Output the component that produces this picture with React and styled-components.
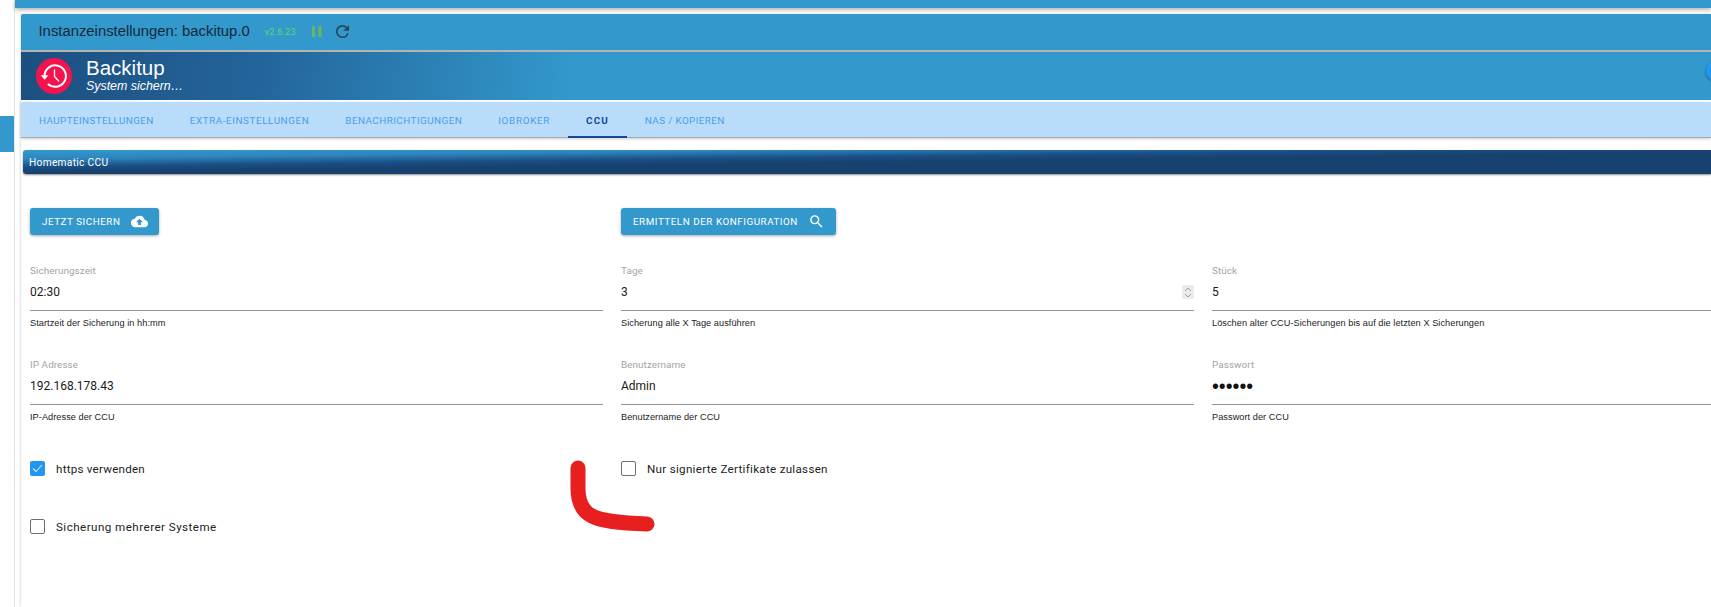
import React from 'react';
import styled, { createGlobalStyle } from 'styled-components';

const Global = createGlobalStyle`
  html, body { margin: 0; padding: 0; background: #fff; overflow: hidden; }
  body { font-family: "Liberation Sans", Arial, sans-serif; }
  * { box-sizing: border-box; }
`;
const Page = styled.div`
  position: relative; width: 1711px; height: 607px; overflow: hidden; display: flex; background: #fff;
`;
const Rail = styled.aside`
  width: 15px; flex: none; padding-top: 116px; border-right: 1px solid #e3e3e3;
`;
const RailMark = styled.div`
  width: 14px; height: 36px; background: #3399cc;
`;
const Main = styled.main`
  flex: 1; min-width: 0; display: flex; flex-direction: column;
`;
const TopBar = styled.div`
  height: 8px; flex: none; background: #3399cc; box-shadow: 0 2px 4px rgba(0,0,0,.3);
`;
const Panel = styled.div`
  margin: 6px 0 0 6px; flex: 1; min-height: 0; display: flex; flex-direction: column;
  box-shadow: -1px 0 2px rgba(0,0,0,.12);
`;
const TitleBar = styled.div`
  height: 38px; flex: none; background: #3399cc; border-bottom: 2px solid #b4b4b4;
  display: flex; align-items: center; padding: 0 0 2px 17.5px; border-radius: 2px 0 0 0;
`;
const Title = styled.h1`
  margin: 0; font-size: 14.85px; font-weight: 400; color: #14283a; font-family: "Liberation Sans", sans-serif;
`;
const Version = styled.span`
  margin-left: 15px; font-size: 9.3px; color: #5fd56f; font-family: Roboto, sans-serif; letter-spacing: .1px;
`;
const IconSlot = styled.span`
  display: inline-flex; margin-left: ${p => p.$gap}px; color: ${p => p.$color};
`;
const Header = styled.header`
  height: 48px; flex: none; display: flex; align-items: center; padding-left: 15px; position: relative;
  background: linear-gradient(100deg, #1c4f80 0%, #23649a 14%, #3399cc 33%, #3399cc 100%);
`;
const LogoDisc = styled.div`
  width: 36px; height: 36px; border-radius: 50%; background: #f4134c; flex: none;
  display: flex; align-items: center; justify-content: center;
`;
const Brand = styled.div`
  margin-left: 14px; color: #fff; display: flex; flex-direction: column;
`;
const BrandName = styled.div`
  font-size: 20.5px; line-height: 20px;
`;
const BrandSub = styled.div`
  font-size: 12.4px; font-style: italic; line-height: 15px; margin-top: 1px;
`;
const Fab = styled.div`
  position: absolute; right: -15px; top: 9px; width: 20px; height: 20px; border-radius: 50%;
  background: #2196f3; box-shadow: 0 1px 3px rgba(0,0,0,.4);
`;
const Tabs = styled.nav`
  margin-top: 2px; height: 36px; flex: none; background: #b9dcfa; display: flex;
  border-bottom: 1px solid #a8a8a8; box-shadow: 0 1px 3px rgba(0,0,0,.2);
`;
const Tab = styled.div`
  height: 36px; display: flex; align-items: center; padding: ${p => p.$active ? '2px' : '0'} 18px 0;
  font: ${p => p.$active ? 700 : 400} 9.9px Roboto, sans-serif; letter-spacing: ${p => p.$ls}px; text-transform: uppercase;
  color: ${p => p.$active ? '#15479b' : '#4a9ee8'};
  border-bottom: ${p => p.$active ? '2px solid #15479b' : '0'};
  white-space: nowrap;
`;
const Section = styled.div`
  margin: 12px 0 0 2px; height: 24px; flex: none; border-radius: 3px 0 0 3px; padding-left: 6px;
  display: flex; align-items: center; color: #fff; font: 400 10.2px Roboto, sans-serif; letter-spacing: .3px;
  background: linear-gradient(179.3deg, #3399cc 0%, #2e86bd 20%, #1a4f85 38%, #174270 50%, #174270 100%);
  box-shadow: 0 1px 2px rgba(0,0,0,.45);
`;
const Content = styled.div`
  padding: 34px 0 0 9px; display: grid; grid-template-columns: repeat(3, 573px); column-gap: 18px; width: 1800px;
`;
const ButtonCell = styled.div`
  height: 27px; margin-bottom: 29px;
`;
const Button = styled.button`
  height: 27px; border: 0; border-radius: 3px; background: #3399cc; color: #fff; display: inline-flex; align-items: center;
  padding: 0 11px 0 12px; font: 400 9.8px Roboto, sans-serif; letter-spacing: .55px; text-transform: uppercase;
  box-shadow: 0 1px 3px rgba(0,0,0,.35); white-space: nowrap;
`;
const ButtonIcon = styled.span`
  display: inline-flex; margin-left: ${p => p.$gap}px;
`;
const Field = styled.div`
  position: relative; height: 94px;
`;
const Label = styled.div`
  height: 13px; font: 400 9.9px/13px Roboto, sans-serif; color: #a3a3a3; letter-spacing: .08px;
`;
const Value = styled.div`
  height: 32px; padding-top: 5px; font: 400 12px/16px Roboto, sans-serif; color: #1a1a1a;
  border-bottom: 1px solid #949494; margin-top: 2px;
`;
const Dots = styled.span`
  font: 400 19.6px/16px "Liberation Sans", sans-serif; color: #111;
`;
const Help = styled.div`
  margin-top: 6px; font: 400 9.2px/12px "Liberation Sans", sans-serif; color: #222; letter-spacing: .05px;
`;
const Spinner = styled.div`
  position: absolute; right: 0; top: 21px; width: 12px; height: 14px; background: #ebebeb;
  display: flex; align-items: center; justify-content: center;
`;
const CheckRow = styled.label`
  grid-column: ${p => p.$col || 'auto'}; display: flex; align-items: center; height: 15px; margin-top: ${p => p.$mt || 0}px;
  font: 400 11.6px Roboto, sans-serif; color: #222; letter-spacing: ${p => p.$ls || 0.3}px;
`;
const Box = styled.span`
  width: 15px; height: 15px; flex: none; border-radius: 2px; margin-right: 11px;
  display: flex; align-items: center; justify-content: center;
  background: ${p => p.$on ? '#2196f3' : '#fff'}; border: ${p => p.$on ? '0' : '1px solid #6e6e6e'};
`;
const Scribble = styled.svg`
  position: absolute; left: 560px; top: 455px; pointer-events: none;
`;

const fields = [
  [['Sicherungszeit', '02:30', 'Startzeit der Sicherung in hh:mm'], ['Tage', '3', 'Sicherung alle X Tage ausführen', 'spin'], ['Stück', '5', 'Löschen alter CCU-Sicherungen bis auf die letzten X Sicherungen']],
  [['IP Adresse', '192.168.178.43', 'IP-Adresse der CCU'], ['Benutzername', 'Admin', 'Benutzername der CCU'], ['Passwort', 'dots', 'Passwort der CCU']],
];

const Tick = () => (
  <svg width="11" height="9" viewBox="0 0 11 9" fill="none"><path d="M1 4.5 4 7.5 10 1" stroke="#d7ecfd" strokeWidth="1.1" /></svg>
);

export default function App() {
  return (
    <Page>
      <Global />
      <Rail><RailMark /></Rail>
      <Main>
        <TopBar />
        <Panel>
          <TitleBar>
            <Title>Instanzeinstellungen: backitup.0</Title>
            <Version>v2.6.23</Version>
            <IconSlot $gap={16} $color="#5db45f">
              <svg width="10" height="11" viewBox="0 0 10 11"><rect x="0" y="0" width="3" height="11" fill="#66b85f" /><rect x="6.5" y="0" width="3" height="11" fill="#66b85f" /></svg>
            </IconSlot>
            <IconSlot $gap={14} $color="#26445c">
              <svg width="13" height="13" viewBox="4 4 16 16" fill="currentColor"><path d="M17.65 6.35A7.958 7.958 0 0 0 12 4c-4.42 0-7.99 3.58-7.99 8s3.57 8 7.99 8c3.73 0 6.84-2.55 7.73-6h-2.08A5.99 5.99 0 0 1 12 18c-3.31 0-6-2.69-6-6s2.69-6 6-6c1.66 0 3.14.69 4.22 1.78L13 11h7V4l-2.35 2.35z" /></svg>
            </IconSlot>
          </TitleBar>
          <Header>
            <LogoDisc>
              <svg width="28" height="28" viewBox="0 0 28 28" fill="none" stroke="#fff">
                <path d="M4.5 14a10.7 10.7 0 1 1 3.4 7.9" strokeWidth="2" />
                <path d="M0.8 13.3h7.6L4.6 17.8z" fill="#fff" stroke="none" />
                <path d="M14.5 7.5v7l4.6 5" strokeWidth="1.3" />
              </svg>
            </LogoDisc>
            <Brand>
              <BrandName>Backitup</BrandName>
              <BrandSub>System sichern…</BrandSub>
            </Brand>
            <Fab />
          </Header>
          <Tabs>
            <Tab $ls={0.38}>Haupteinstellungen</Tab>
            <Tab $ls={0.56}>Extra-Einstellungen</Tab>
            <Tab $ls={0.44}>Benachrichtigungen</Tab>
            <Tab $ls={0.68}>ioBroker</Tab>
            <Tab $active $ls={1.1}>CCU</Tab>
            <Tab $ls={0.38}>NAS / Kopieren</Tab>
          </Tabs>
          <Section>Homematic CCU</Section>
          <Content>
            <ButtonCell>
              <Button>Jetzt sichern
                <ButtonIcon $gap={11}>
                  <svg width="17" height="17" viewBox="0 0 24 24" fill="#fff"><path d="M19.35 10.04A7.49 7.49 0 0 0 12 4C9.11 4 6.6 5.64 5.35 8.04A5.994 5.994 0 0 0 0 14c0 3.31 2.69 6 6 6h13c2.76 0 5-2.24 5-5 0-2.64-2.05-4.78-4.65-4.96zM14 13v4h-4v-4H7l5-5 5 5h-3z" /></svg>
                </ButtonIcon>
              </Button>
            </ButtonCell>
            <ButtonCell>
              <Button>Ermitteln der Konfiguration
                <ButtonIcon $gap={10}>
                  <svg width="17" height="17" viewBox="0 0 24 24" fill="#fff"><path d="M15.5 14h-.79l-.28-.27A6.47 6.47 0 0 0 16 9.5 6.5 6.5 0 1 0 9.5 16c1.61 0 3.09-.59 4.23-1.57l.27.28v.79l5 4.99L20.49 19l-4.99-5zm-6 0C7.01 14 5 11.99 5 9.5S7.01 5 9.5 5 14 7.01 14 9.5 11.99 14 9.5 14z" /></svg>
                </ButtonIcon>
              </Button>
            </ButtonCell>
            <div />
            {fields.flat().map(([label, value, help, extra]) => (
              <Field key={label}>
                <Label>{label}</Label>
                <Value>{value === 'dots' ? <Dots>••••••</Dots> : value}</Value>
                <Help>{help}</Help>
                {extra && (
                  <Spinner>
                    <svg width="8" height="11" viewBox="0 0 8 11" fill="none" stroke="#8c8c8c" strokeWidth=".8"><path d="M1 4 4 1l3 3M1 7l3 3 3-3" /></svg>
                  </Spinner>
                )}
              </Field>
            ))}
            <CheckRow $mt={9} $ls={0.24}><Box $on><Tick /></Box>https verwenden</CheckRow>
            <CheckRow $mt={9}><Box />Nur signierte Zertifikate zulassen</CheckRow>
            <div />
            <CheckRow $mt={43} $col="1" $ls={0.47}><Box />Sicherung mehrerer Systeme</CheckRow>
          </Content>
        </Panel>
      </Main>
      <Scribble width="105" height="85" viewBox="0 0 105 85" fill="none">
        <path d="M18 13L18 33C18 48 24 57 32 61C42 66 58 68 87 69" stroke="#e81f1f" strokeWidth="15" strokeLinecap="round" strokeLinejoin="round" />
      </Scribble>
    </Page>
  );
}
